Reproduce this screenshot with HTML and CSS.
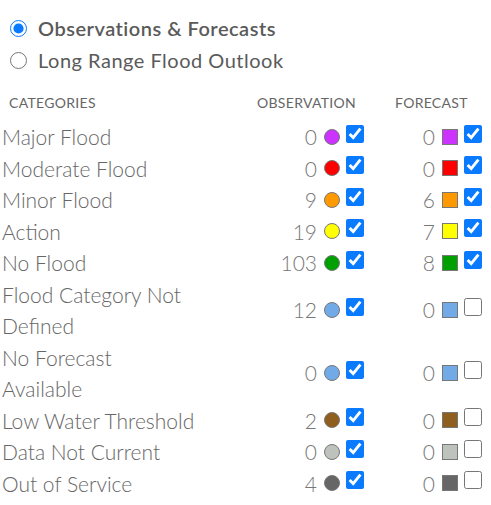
FILE: index.html
```html
<!DOCTYPE html>
<html lang="en">
<head>
  <meta charset="UTF-8">
  <meta name="viewport" content="width=device-width, initial-scale=1.0">
  <title>Flood Categories</title>
  <link rel="stylesheet" href="styles.css">
</head>
<body>
  <!-- mode switch -->
  <div class="modes">
    <label class="mode mode-active"><input type="radio" name="mode" checked> Observations &amp; Forecasts</label>
    <label class="mode"><input type="radio" name="mode"> Long Range Flood Outlook</label>
  </div>

  <!-- legend -->
  <div class="legend">
    <div class="legend-row legend-head">
      <span class="head-cat">CATEGORIES</span>
      <span class="head-obs">OBSERVATION</span>
      <span class="head-fcst">FORECAST</span>
    </div>

    <div class="legend-row">
      <span class="cat-name">Major Flood</span>
      <span class="obs"><span class="count">0</span><i class="dot" style="background:#cc33ff"></i><input type="checkbox" checked></span>
      <span class="fcst"><span class="count">0</span><i class="box" style="background:#cc33ff"></i><input type="checkbox" checked></span>
    </div>
    <div class="legend-row">
      <span class="cat-name">Moderate Flood</span>
      <span class="obs"><span class="count">0</span><i class="dot" style="background:#ff0000"></i><input type="checkbox" checked></span>
      <span class="fcst"><span class="count">0</span><i class="box" style="background:#ff0000"></i><input type="checkbox" checked></span>
    </div>
    <div class="legend-row">
      <span class="cat-name">Minor Flood</span>
      <span class="obs"><span class="count">9</span><i class="dot" style="background:#ff9900"></i><input type="checkbox" checked></span>
      <span class="fcst"><span class="count">6</span><i class="box" style="background:#ff9900"></i><input type="checkbox" checked></span>
    </div>
    <div class="legend-row">
      <span class="cat-name">Action</span>
      <span class="obs"><span class="count">19</span><i class="dot" style="background:#ffff00"></i><input type="checkbox" checked></span>
      <span class="fcst"><span class="count">7</span><i class="box" style="background:#ffff00"></i><input type="checkbox" checked></span>
    </div>
    <div class="legend-row">
      <span class="cat-name">No Flood</span>
      <span class="obs"><span class="count">103</span><i class="dot" style="background:#00a000"></i><input type="checkbox" checked></span>
      <span class="fcst"><span class="count">8</span><i class="box" style="background:#00a000"></i><input type="checkbox" checked></span>
    </div>
    <div class="legend-row">
      <span class="cat-name">Flood Category Not Defined</span>
      <span class="obs"><span class="count">12</span><i class="dot" style="background:#72aae8"></i><input type="checkbox" checked></span>
      <span class="fcst"><span class="count">0</span><i class="box" style="background:#72aae8"></i><input type="checkbox"></span>
    </div>
    <div class="legend-row">
      <span class="cat-name">No Forecast Available</span>
      <span class="obs"><span class="count">0</span><i class="dot" style="background:#72aae8"></i><input type="checkbox" checked></span>
      <span class="fcst"><span class="count">0</span><i class="box" style="background:#72aae8"></i><input type="checkbox"></span>
    </div>
    <div class="legend-row">
      <span class="cat-name">Low Water Threshold</span>
      <span class="obs"><span class="count">2</span><i class="dot" style="background:#8f5f1f"></i><input type="checkbox" checked></span>
      <span class="fcst"><span class="count">0</span><i class="box" style="background:#8f5f1f"></i><input type="checkbox"></span>
    </div>
    <div class="legend-row">
      <span class="cat-name">Data Not Current</span>
      <span class="obs"><span class="count">0</span><i class="dot" style="background:#bdc2bd"></i><input type="checkbox" checked></span>
      <span class="fcst"><span class="count">0</span><i class="box" style="background:#bdc2bd"></i><input type="checkbox"></span>
    </div>
    <div class="legend-row">
      <span class="cat-name">Out of Service</span>
      <span class="obs"><span class="count">4</span><i class="dot" style="background:#666666"></i><input type="checkbox" checked></span>
      <span class="fcst"><span class="count">0</span><i class="box" style="background:#666666"></i><input type="checkbox"></span>
    </div>
  </div>
</body>
</html>
```

FILE: styles.css
```css
body {
  margin: 0;
  font-family: 'Lato', 'Open Sans', sans-serif;
  background: #fff;
  color: #666;
}

/* mode switch */
.modes {
  padding-top: 12px;
}

.mode {
  display: flex;
  align-items: center;
  height: 32px;
  padding-left: 10px;
  font-size: 20px;
  letter-spacing: 0.5px;
  color: #5a5a5a;
}

.mode-active {
  font-weight: 600;
}

.mode input {
  width: 17px;
  height: 17px;
  margin: 0 11px 0 0;
  accent-color: #0a7aff;
}

/* legend */
.legend {
  margin: 17px 0 0 2px;
}

.legend-row {
  display: grid;
  grid-template-columns: 255px 116px 1fr;
  align-items: center;
  font-size: 21px;
  font-weight: 300;
  line-height: 31.5px;
}

.legend-head {
  font-size: 14px;
  font-weight: 400;
  letter-spacing: 0.3px;
  line-height: 20px;
  padding-bottom: 8px;
  color: #666;
}

.head-cat {
  padding-left: 7px;
}

.head-fcst {
  padding-left: 22px;
}

.cat-name {
  max-width: 193.5px;
}

.obs, .fcst {
  display: flex;
  justify-content: flex-end;
  align-items: center;
  padding-right: 9px;
}

.count {
  color: #777;
  margin-right: 7px;
}

.dot, .box {
  display: inline-block;
  width: 16px;
  height: 16px;
  box-sizing: border-box;
  border: 1px solid #777;
}

.dot {
  border-radius: 50%;
}

.obs input, .fcst input {
  width: 18px;
  height: 18px;
  margin: 0 0 6px 6px;
  accent-color: #0a7aff;
}
```
